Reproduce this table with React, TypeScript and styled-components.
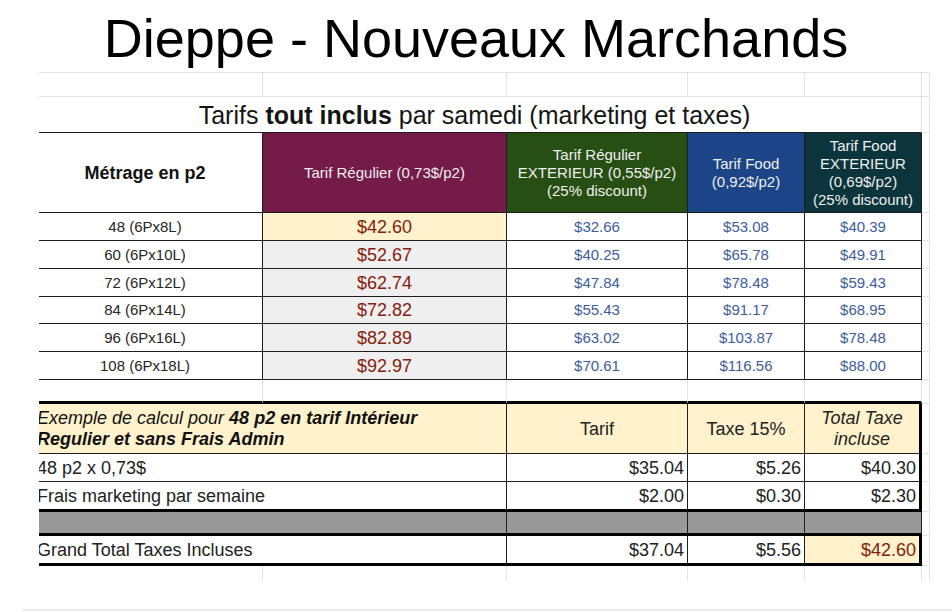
import React from 'react';
import styled, { createGlobalStyle } from 'styled-components';

const GlobalStyle = createGlobalStyle`
  html, body { margin: 0; padding: 0; background: #ffffff; }
  body { font-family: "Liberation Sans", Arial, sans-serif; }
`;

const LIGHT = '1px solid #e3e3e3';
const DARK = '1px solid #1e1e1e';
const THICK = '3px solid #000000';
const MAROON = '#85200c';
const BLUE = '#3d5c9c';
const CREAM = '#fff2cc';

const Page = styled.div`
  width: 952px;
  height: 612px;
  overflow: hidden;
  background: #fff;
  display: flex;
  flex-direction: column;
`;

const TitleBar = styled.h1`
  margin: 0;
  height: 72px;
  box-sizing: border-box;
  padding-top: 7px;
  font-size: 54px;
  font-weight: 400;
  line-height: normal;
  text-align: center;
  color: #000;
`;

const Viewport = styled.div`
  margin-left: 39px;
  width: 891px;
  overflow: hidden;
`;

const Sheet = styled.div`
  margin-left: -11px;
  width: 902px;
  display: grid;
  grid-template-columns: 235px 244px 181px 117px 117px 8px;
  grid-template-rows: 24px 36px 80px 28px 28px 28px 27px 28px 28px 24px 50px 28px 30px 24px 30px 15px;
  border-top: ${LIGHT};
`;

const Footer = styled.div`
  margin-top: auto;
  margin-left: 22px;
  margin-bottom: 1px;
  border-top: 2px solid #ececec;
`;

type CellProps = {
  $span?: number;
  $align?: 'left' | 'center' | 'right';
  $bg?: string;
  $fg?: string;
  $size?: number;
  $bold?: boolean;
  $italic?: boolean;
  $lh?: number;
  $r?: string;
  $b?: string;
};

const Cell = styled.div<CellProps>`
  grid-column: span ${(p) => p.$span ?? 1};
  box-sizing: border-box;
  display: flex;
  align-items: center;
  justify-content: ${(p) =>
    p.$align === 'left' ? 'flex-start' : p.$align === 'right' ? 'flex-end' : 'center'};
  text-align: ${(p) => p.$align ?? 'center'};
  padding-left: ${(p) => (p.$align === 'left' ? '9px' : '0')};
  padding-right: ${(p) => (p.$align === 'right' ? '3px' : '0')};
  background: ${(p) => p.$bg ?? 'transparent'};
  color: ${(p) => p.$fg ?? '#222'};
  font-size: ${(p) => p.$size ?? 15}px;
  font-weight: ${(p) => (p.$bold ? 700 : 400)};
  font-style: ${(p) => (p.$italic ? 'italic' : 'normal')};
  line-height: ${(p) => p.$lh ?? 18}px;
  border-right: ${(p) => p.$r ?? 'none'};
  border-bottom: ${(p) => p.$b ?? 'none'};
  overflow: hidden;
  white-space: nowrap;
`;

const CellText = styled.span`
  display: block;
`;

const Banner = styled(Cell)`
  font-size: 25px;
  line-height: 28px;
  color: #151515;
`;

const HeadCell = styled(Cell)`
  color: #efefef;
`;

const Strong = styled.b`
  font-weight: 700;
`;

/* data */
const headers = [
  { bg: '#741b47', lines: ['Tarif Régulier (0,73$/p2)'] },
  { bg: '#274e13', lines: ['Tarif Régulier', 'EXTERIEUR (0,55$/p2)', '(25% discount)'] },
  { bg: '#1c4587', lines: ['Tarif Food', '(0,92$/p2)'] },
  { bg: '#0c343d', lines: ['Tarif Food', 'EXTERIEUR', '(0,69$/p2)', '(25% discount)'] },
];

const rows = [
  ['48 (6Px8L)', '$42.60', '$32.66', '$53.08', '$40.39'],
  ['60 (6Px10L)', '$52.67', '$40.25', '$65.78', '$49.91'],
  ['72 (6Px12L)', '$62.74', '$47.84', '$78.48', '$59.43'],
  ['84 (6Px14L)', '$72.82', '$55.43', '$91.17', '$68.95'],
  ['96 (6Px16L)', '$82.89', '$63.02', '$103.87', '$78.48'],
  ['108 (6Px18L)', '$92.97', '$70.61', '$116.56', '$88.00'],
];

const calcRows = [
  { label: '48 p2 x 0,73$', values: ['$35.04', '$5.26', '$40.30'], bottom: DARK },
  { label: 'Frais marketing par semaine', values: ['$2.00', '$0.30', '$2.30'], bottom: THICK },
];

const Spill = () => <Cell $r={LIGHT} $b={LIGHT} />;

export default function App() {
  return (
    <>
      <GlobalStyle />
      <Page>
        <TitleBar>Dieppe - Nouveaux Marchands</TitleBar>
        <Viewport>
          <Sheet>
            {/* empty row */}
            {[0, 1, 2, 3, 4].map((i) => (
              <Cell key={`e${i}`} $r={LIGHT} $b={LIGHT} />
            ))}
            <Spill />

            {/* banner */}
            <Banner $span={5} $r={LIGHT} $b={DARK}>
              <CellText>
                Tarifs <Strong>tout inclus</Strong> par samedi (marketing et taxes)
              </CellText>
            </Banner>
            <Spill />

            {/* header */}
            <Cell $size={18} $bold $fg="#111" $r={DARK} $b={DARK}>
              <CellText>Métrage en p2</CellText>
            </Cell>
            {headers.map((h, i) => (
              <HeadCell key={i} $bg={h.bg} $r={DARK} $b={DARK}>
                <CellText>
                  {h.lines.map((l, j) => (
                    <React.Fragment key={j}>
                      {j > 0 && <br />}
                      {l}
                    </React.Fragment>
                  ))}
                </CellText>
              </HeadCell>
            ))}
            <Spill />

            {/* data rows */}
            {rows.map((r, ri) => (
              <React.Fragment key={ri}>
                <Cell $fg="#262626" $r={DARK} $b={DARK}>
                  {r[0]}
                </Cell>
                <Cell
                  $size={18}
                  $fg={MAROON}
                  $bg={ri === 0 ? CREAM : '#efefef'}
                  $r={DARK}
                  $b={DARK}
                >
                  {r[1]}
                </Cell>
                {r.slice(2).map((v, vi) => (
                  <Cell key={vi} $fg={BLUE} $r={DARK} $b={DARK}>
                    {v}
                  </Cell>
                ))}
                <Spill />
              </React.Fragment>
            ))}

            {/* gap row above the calculation block */}
            {[0, 1, 2, 3, 4].map((i) => (
              <Cell key={`g${i}`} $r={LIGHT} $b={THICK} />
            ))}
            <Spill />

            {/* calculation header */}
            <Cell $span={2} $align="left" $italic $size={18} $lh={21} $bg={CREAM} $fg="#111" $r={DARK} $b={DARK}>
              <CellText>
                Exemple de calcul pour <Strong>48 p2 en tarif Intérieur</Strong>
                <br />
                <Strong>Regulier et sans Frais Admin</Strong>
              </CellText>
            </Cell>
            <Cell $size={18} $bg={CREAM} $r={DARK} $b={DARK}>
              Tarif
            </Cell>
            <Cell $size={18} $bg={CREAM} $r={DARK} $b={DARK}>
              Taxe 15%
            </Cell>
            <Cell $size={18} $lh={21} $italic $bg={CREAM} $r={THICK} $b={DARK}>
              <CellText>
                Total Taxe
                <br />
                incluse
              </CellText>
            </Cell>
            <Spill />

            {calcRows.map((c, ci) => (
              <React.Fragment key={ci}>
                <Cell $span={2} $align="left" $size={18} $r={DARK} $b={c.bottom}>
                  {c.label}
                </Cell>
                {c.values.map((v, vi) => (
                  <Cell
                    key={vi}
                    $align="right"
                    $size={18}
                    $r={vi === 2 ? THICK : DARK}
                    $b={c.bottom}
                  >
                    {v}
                  </Cell>
                ))}
                <Spill />
              </React.Fragment>
            ))}

            {/* gray separator */}
            <Cell $span={2} $bg="#999999" $r={DARK} $b={THICK} />
            <Cell $bg="#999999" $r={DARK} $b={THICK} />
            <Cell $bg="#999999" $r={DARK} $b={THICK} />
            <Cell $bg="#999999" $r={DARK} $b={THICK} />
            <Spill />

            {/* grand total */}
            <Cell $span={2} $align="left" $size={18} $r={DARK} $b={THICK}>
              Grand Total Taxes Incluses
            </Cell>
            <Cell $align="right" $size={18} $r={DARK} $b={THICK}>
              $37.04
            </Cell>
            <Cell $align="right" $size={18} $r={DARK} $b={THICK}>
              $5.56
            </Cell>
            <Cell $align="right" $size={18} $fg={MAROON} $bg={CREAM} $r={THICK} $b={THICK}>
              $42.60
            </Cell>
            <Spill />

            {/* tail row */}
            {[0, 1, 2, 3, 4, 5].map((i) => (
              <Cell key={`t${i}`} $r={LIGHT} />
            ))}
          </Sheet>
        </Viewport>
        <Footer />
      </Page>
    </>
  );
}
